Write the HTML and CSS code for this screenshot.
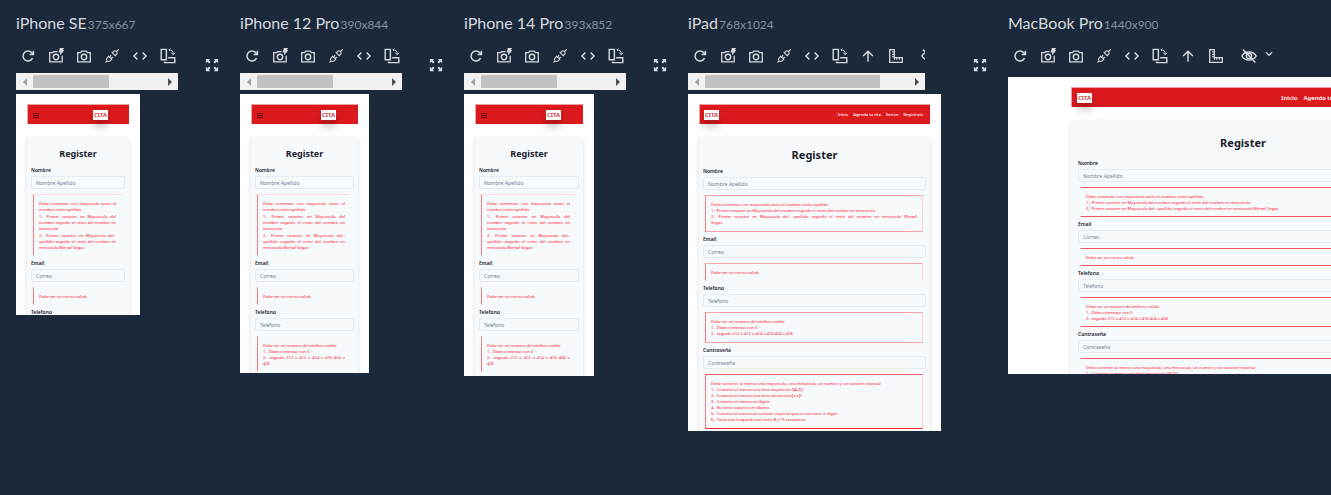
FILE: index.html
```html
<!DOCTYPE html>
<html lang="es">
<head>
<meta charset="utf-8">
<title>Device preview</title>
<link rel="stylesheet" href="styles.css">
</head>
<body>
<svg class="sprite" aria-hidden="true">
  <symbol id="i-refresh" viewBox="0 0 16 16"><path d="M12.5 10.2A5 5 0 1 1 11.8 4.7L13.2 6.2M13.4 2.8V6.4H9.6" fill="none" stroke="currentColor" stroke-width="1.5"/></symbol>
  <symbol id="i-flash" viewBox="0 0 16 16"><path d="M9.6 3.7H5.6L4.6 4.7H1.7V13.9H14.2V7.8" fill="none" stroke="currentColor" stroke-width="1.3"/><circle cx="8" cy="9" r="2.7" fill="none" stroke="currentColor" stroke-width="1.4"/><path d="M11.8 0H16L14.8 2.2H16.4L11.9 7.6 12.4 4.6H10.6Z" fill="currentColor"/></symbol>
  <symbol id="i-camera" viewBox="0 0 16 16"><path d="M1.7 4.6H4.6L5.7 3.2H10.3L11.4 4.6H14.3V13.9H1.7Z" fill="none" stroke="currentColor" stroke-width="1.3"/><circle cx="8" cy="9" r="2.7" fill="none" stroke="currentColor" stroke-width="1.4"/></symbol>
  <symbol id="i-plug" viewBox="0 0 16 16"><path d="M1.4 14.6 3.6 12.4M12.4 3.6 14.6 1.4M3.2 9.8 4.8 8.2 7.8 11.2 6.2 12.8A2.1 2.1 0 0 1 3.2 9.8ZM8.3 4.8 9.9 3.2A2.1 2.1 0 0 1 12.8 6.1L11.2 7.7ZM5.6 8.8 7.2 7.2M7.2 10.4 8.8 8.8M7.8 4.3 11.7 8.2M4.3 7.8 8.2 11.7" fill="none" stroke="currentColor" stroke-width="1.1"/></symbol>
  <symbol id="i-code" viewBox="0 0 16 16"><path d="M5.4 4.5 2 8 5.4 11.5M10.6 4.5 14 8 10.6 11.5" fill="none" stroke="currentColor" stroke-width="1.5"/></symbol>
  <symbol id="i-rotate" viewBox="0 0 16 16"><path d="M1.2 1.4H6.4V11.8H1.2ZM8.2 9.7H14.8V14.6H4.6V13.4" fill="none" stroke="currentColor" stroke-width="1.4"/><path d="M9 1.8C11.5 1.8 13.3 3.2 13.3 6.4M11.4 4.8 13.3 6.7 15.2 4.8M10.3.5 9 1.8 10.3 3.1" fill="none" stroke="currentColor" stroke-width="1"/></symbol>
  <symbol id="i-up" viewBox="0 0 16 16"><path d="M8 13.5V3.3M3.2 8 8 3.2 12.8 8" fill="none" stroke="currentColor" stroke-width="1.5"/></symbol>
  <symbol id="i-ruler" viewBox="0 0 16 16"><path d="M1.7 1.7H6.3V9.7H14.3V14.3H1.7Z" fill="none" stroke="currentColor" stroke-width="1.3"/><path d="M4 4H6M4 6.4H6M4 8.8H6M6.4 12V10M8.8 12V10M11.2 12V10" fill="none" stroke="currentColor" stroke-width="1"/></symbol>
  <symbol id="i-eye" viewBox="0 0 16 16"><path d="M.9 8C3.7 2.6 12.3 2.6 15.1 8 12.3 13.4 3.7 13.4.9 8ZM2 1.6 14.4 14.4" fill="none" stroke="currentColor" stroke-width="1.5"/><circle cx="8" cy="8" r="2.6" fill="none" stroke="currentColor" stroke-width="1.5"/></symbol>
  <symbol id="i-down" viewBox="0 0 16 16"><path d="M3 5 8 10 13 5" fill="none" stroke="currentColor" stroke-width="2"/></symbol>
  <symbol id="i-expand" viewBox="0 0 16 16"><path d="M1 6V1H6L4.4 2.6 6.4 4.6 4.6 6.4 2.6 4.4ZM10 1H15V6L13.4 4.4 11.4 6.4 9.6 4.6 11.6 2.6ZM1 10V15H6L4.4 13.4 6.4 11.4 4.6 9.6 2.6 11.6ZM15 10V15H10L11.6 13.4 9.6 11.4 11.4 9.6 13.4 11.6Z" fill="currentColor"/></symbol>
  <symbol id="i-menu" viewBox="0 0 6 6"><path d="M0 1.5H6M0 3.5H6M0 5.5H6" stroke="currentColor" stroke-width=".7"/></symbol>
</svg>

<main class="devices">
  <section class="device">
    <h2 class="device-title">iPhone SE <small>375x667</small></h2>
    <div class="controls">
      <div class="tool-area">
        <div class="toolbar">
          <button aria-label="Refresh"><svg><use href="#i-refresh"/></svg></button>
          <button aria-label="Quick screenshot"><svg><use href="#i-flash"/></svg></button>
          <button aria-label="Full screenshot"><svg><use href="#i-camera"/></svg></button>
          <button aria-label="Disable sync"><svg><use href="#i-plug"/></svg></button>
          <button aria-label="Devtools"><svg><use href="#i-code"/></svg></button>
          <button aria-label="Rotate"><svg><use href="#i-rotate"/></svg></button>
        </div>
        <div class="scroller"><i class="arrow arrow-left"></i><span class="track"><i class="thumb"></i></span><i class="arrow arrow-right"></i></div>
      </div>
      <button class="expand" aria-label="Expand"><svg><use href="#i-expand"/></svg></button>
    </div>
    <div class="screen screen-se">
      <header class="navbar"><button class="menu" aria-label="Menu"><svg><use href="#i-menu"/></svg></button><span class="logo">CITA</span></header>
      <form class="card">
        <h1>Register</h1>
        <label for="se-name">Nombre</label>
        <input id="se-name" placeholder="Nombre Apellido">
        <div class="rules spaced"><p>Debe comenzar con mayuscula tanto el nombre como apellido</p><p>1.- Primer caracter en Mayuscula del nombre seguido el resto del nombre en minuscula</p><p>2.- Primer caracter en Mayuscula del.. apellido seguido el resto del nombre en minuscula Merwil Vegas</p></div>
        <label for="se-mail">Email</label>
        <input id="se-mail" placeholder="Correo">
        <div class="rules open"><p>Debe ser un correo valido</p></div>
        <label for="se-tel">Telefono</label>
        <input id="se-tel" placeholder="Telefono">
      </form>
    </div>
  </section>

  <section class="device">
    <h2 class="device-title">iPhone 12 Pro <small>390x844</small></h2>
    <div class="controls">
      <div class="tool-area">
        <div class="toolbar">
          <button aria-label="Refresh"><svg><use href="#i-refresh"/></svg></button>
          <button aria-label="Quick screenshot"><svg><use href="#i-flash"/></svg></button>
          <button aria-label="Full screenshot"><svg><use href="#i-camera"/></svg></button>
          <button aria-label="Disable sync"><svg><use href="#i-plug"/></svg></button>
          <button aria-label="Devtools"><svg><use href="#i-code"/></svg></button>
          <button aria-label="Rotate"><svg><use href="#i-rotate"/></svg></button>
        </div>
        <div class="scroller"><i class="arrow arrow-left"></i><span class="track"><i class="thumb"></i></span><i class="arrow arrow-right"></i></div>
      </div>
      <button class="expand" aria-label="Expand"><svg><use href="#i-expand"/></svg></button>
    </div>
    <div class="screen screen-12">
      <header class="navbar"><button class="menu" aria-label="Menu"><svg><use href="#i-menu"/></svg></button><span class="logo">CITA</span></header>
      <form class="card">
        <h1>Register</h1>
        <label for="p12-name">Nombre</label>
        <input id="p12-name" placeholder="Nombre Apellido">
        <div class="rules spaced"><p><span class="full">Debe comenzar con mayuscula tanto el</span>nombre como apellido</p><p>1.- Primer caracter en Mayuscula del nombre seguido el resto del nombre en minuscula</p><p>2.- Primer caracter en Mayuscula del.. apellido seguido el resto del nombre en minuscula Merwil Vegas</p></div>
        <label for="p12-mail">Email</label>
        <input id="p12-mail" placeholder="Correo">
        <div class="rules open"><p>Debe ser un correo valido</p></div>
        <label for="p12-tel">Telefono</label>
        <input id="p12-tel" placeholder="Telefono">
        <div class="rules open"><p>Debe ser un numero de telefono valido</p><p>1.- Debe comenzar con 0</p><p><span class="full">2.- seguido 212 o 412 o 414 o 416 424 o</span>426</p></div>
      </form>
    </div>
  </section>

  <section class="device">
    <h2 class="device-title">iPhone 14 Pro <small>393x852</small></h2>
    <div class="controls">
      <div class="tool-area">
        <div class="toolbar">
          <button aria-label="Refresh"><svg><use href="#i-refresh"/></svg></button>
          <button aria-label="Quick screenshot"><svg><use href="#i-flash"/></svg></button>
          <button aria-label="Full screenshot"><svg><use href="#i-camera"/></svg></button>
          <button aria-label="Disable sync"><svg><use href="#i-plug"/></svg></button>
          <button aria-label="Devtools"><svg><use href="#i-code"/></svg></button>
          <button aria-label="Rotate"><svg><use href="#i-rotate"/></svg></button>
        </div>
        <div class="scroller"><i class="arrow arrow-left"></i><span class="track"><i class="thumb"></i></span><i class="arrow arrow-right"></i></div>
      </div>
      <button class="expand" aria-label="Expand"><svg><use href="#i-expand"/></svg></button>
    </div>
    <div class="screen screen-14">
      <header class="navbar"><button class="menu" aria-label="Menu"><svg><use href="#i-menu"/></svg></button><span class="logo">CITA</span></header>
      <form class="card">
        <h1>Register</h1>
        <label for="p14-name">Nombre</label>
        <input id="p14-name" placeholder="Nombre Apellido">
        <div class="rules spaced"><p><span class="full">Debe comenzar con mayuscula tanto el</span>nombre como apellido</p><p>1.- Primer caracter en Mayuscula del nombre seguido el resto del nombre en minuscula</p><p>2.- Primer caracter en Mayuscula del.. apellido seguido el resto del nombre en minuscula Merwil Vegas</p></div>
        <label for="p14-mail">Email</label>
        <input id="p14-mail" placeholder="Correo">
        <div class="rules open"><p>Debe ser un correo valido</p></div>
        <label for="p14-tel">Telefono</label>
        <input id="p14-tel" placeholder="Telefono">
        <div class="rules open"><p>Debe ser un numero de telefono valido</p><p>1.- Debe comenzar con 0</p><p><span class="full">2.- seguido 212 o 412 o 414 o 416 424 o</span>426</p></div>
      </form>
    </div>
  </section>

  <section class="device tablet">
    <h2 class="device-title">iPad <small>768x1024</small></h2>
    <div class="controls">
      <div class="tool-area">
        <div class="toolbar">
          <button aria-label="Refresh"><svg><use href="#i-refresh"/></svg></button>
          <button aria-label="Quick screenshot"><svg><use href="#i-flash"/></svg></button>
          <button aria-label="Full screenshot"><svg><use href="#i-camera"/></svg></button>
          <button aria-label="Disable sync"><svg><use href="#i-plug"/></svg></button>
          <button aria-label="Devtools"><svg><use href="#i-code"/></svg></button>
          <button aria-label="Rotate"><svg><use href="#i-rotate"/></svg></button>
          <button aria-label="Scroll to top"><svg><use href="#i-up"/></svg></button>
          <button aria-label="Rulers"><svg><use href="#i-ruler"/></svg></button>
          <button class="vision" aria-label="Vision simulation"><svg><use href="#i-eye"/></svg></button>
        </div>
        <div class="scroller"><i class="arrow arrow-left"></i><span class="track"><i class="thumb"></i></span><i class="arrow arrow-right"></i></div>
      </div>
      <button class="expand" aria-label="Expand"><svg><use href="#i-expand"/></svg></button>
    </div>
    <div class="screen screen-ipad">
      <header class="navbar"><span class="logo">CITA</span><nav><a href="#">Inicio</a><a href="#">Agenda tu cita</a><a href="#">Sesion</a><a href="#">Registrate</a></nav></header>
      <form class="card">
        <h1>Register</h1>
        <label for="pad-name">Nombre</label>
        <input id="pad-name" placeholder="Nombre Apellido">
        <div class="rules"><p>Debe comenzar con mayuscula tanto el nombre como apellido</p><p>1.- Primer caracter en Mayuscula del nombre seguido el resto del nombre en minuscula</p><p><span class="full">2.- Primer caracter en Mayuscula del.. apellido seguido el resto del nombre en minuscula Merwil</span>Vegas</p></div>
        <label for="pad-mail">Email</label>
        <input id="pad-mail" placeholder="Correo">
        <div class="rules open"><p>Debe ser un correo valido</p></div>
        <label for="pad-tel">Telefono</label>
        <input id="pad-tel" placeholder="Telefono">
        <div class="rules"><p>Debe ser un numero de telefono valido</p><p>1.- Debe comenzar con 0</p><p>2.- seguido 212 o 412 o 414 o 416 424 o 426</p></div>
        <label for="pad-pass">Contraseña</label>
        <input id="pad-pass" type="password" placeholder="Contraseña">
        <div class="rules strong"><p>Debe contener al menos una mayuscula, una minuscula, un numero y un caracter especial</p><p>1.- Contiene al menos una letra mayúscula ([A-Z]).</p><p>2.- Contiene al menos una letra minúscula ([a-z]).</p><p>3.- Contiene al menos un dígito .</p><p>4.- No tiene espacios en blanco.</p><p>5.- Contiene al menos un carácter especial que no sea letra ni dígito</p><p>6.- Tiene una longitud total entre 8 y 15 caracteres.</p></div>
      </form>
    </div>
  </section>

  <section class="device desktop">
    <h2 class="device-title">MacBook Pro <small>1440x900</small></h2>
    <div class="controls">
      <div class="tool-area">
        <div class="toolbar">
          <button aria-label="Refresh"><svg><use href="#i-refresh"/></svg></button>
          <button aria-label="Quick screenshot"><svg><use href="#i-flash"/></svg></button>
          <button aria-label="Full screenshot"><svg><use href="#i-camera"/></svg></button>
          <button aria-label="Disable sync"><svg><use href="#i-plug"/></svg></button>
          <button aria-label="Devtools"><svg><use href="#i-code"/></svg></button>
          <button aria-label="Rotate"><svg><use href="#i-rotate"/></svg></button>
          <button aria-label="Scroll to top"><svg><use href="#i-up"/></svg></button>
          <button aria-label="Rulers"><svg><use href="#i-ruler"/></svg></button>
          <button class="vision" aria-label="Vision simulation"><svg><use href="#i-eye"/></svg></button>
          <button class="chevron" aria-label="Vision options"><svg><use href="#i-down"/></svg></button>
        </div>
      </div>
    </div>
    <div class="screen screen-mac">
      <header class="navbar"><span class="logo">CITA</span><nav><a href="#">Inicio</a><a href="#">Agenda tu cita</a><a href="#">Sesion</a><a href="#">Registrate</a></nav></header>
      <form class="card">
        <h1>Register</h1>
        <label for="mac-name">Nombre</label>
        <input id="mac-name" placeholder="Nombre Apellido">
        <div class="rules"><p>Debe comenzar con mayuscula tanto el nombre como apellido</p><p>1.- Primer caracter en Mayuscula del nombre seguido el resto del nombre en minuscula</p><p>2.- Primer caracter en Mayuscula del.. apellido seguido el resto del nombre en minuscula Merwil Vegas</p></div>
        <label for="mac-mail">Email</label>
        <input id="mac-mail" placeholder="Correo">
        <div class="rules"><p>Debe ser un correo valido</p></div>
        <label for="mac-tel">Telefono</label>
        <input id="mac-tel" placeholder="Telefono">
        <div class="rules"><p>Debe ser un numero de telefono valido</p><p>1.- Debe comenzar con 0</p><p>2.- seguido 212 o 412 o 414 o 416 424 o 426</p></div>
        <label for="mac-pass">Contraseña</label>
        <input id="mac-pass" type="password" placeholder="Contraseña">
        <div class="rules"><p>Debe contener al menos una mayuscula, una minuscula, un numero y un caracter especial</p><p>1.- Contiene al menos una letra mayúscula ([A-Z]).</p></div>
      </form>
    </div>
  </section>
</main>
</body>
</html>
```
FILE: styles.css
```css
* { box-sizing: border-box; }
body { margin: 0; min-height: 100vh; overflow: hidden; background: #1b293b; color: #d5d9dd; font-family: Lato, sans-serif; }
button { margin: 0; padding: 0; border: 0; background: none; color: inherit; }
.sprite { display: none; }

/* Device strip */
.devices { display: flex; align-items: flex-start; gap: 16px; padding: 13px 16px; overflow: hidden; }
.device { flex: none; width: 208px; }
.tablet { width: 304px; }
.desktop { width: 560px; }
.device-title { margin: 0; font-size: 16px; line-height: 20px; font-weight: 400; white-space: nowrap; }
.device-title small { margin-left: -3px; font-size: 12px; color: #87909b; }

.controls { display: flex; align-items: center; justify-content: space-between; padding: 5px 6px 0 0; }
.tool-area { width: 162px; padding-top: 4px; overflow: hidden; }
.tablet .tool-area { width: 237px; }
.desktop .tool-area { width: auto; }
.toolbar { display: flex; gap: 4px; padding-bottom: 5px; }
.toolbar button { display: flex; flex: none; align-items: center; justify-content: center; width: 24px; height: 24px; }
.toolbar svg { width: 16px; height: 16px; overflow: visible; }
.toolbar .vision { margin-left: 5px; }
.toolbar .chevron { width: 16px; margin-left: -4px; }
.toolbar .chevron svg { width: 10px; height: 10px; margin-bottom: 4px; }
.expand svg { display: block; width: 14px; height: 14px; margin-right: -1px; }

.scroller { display: flex; align-items: center; height: 17px; background: #f1f1f1; }
.arrow { display: flex; flex: none; justify-content: center; width: 17px; }
.arrow::before { content: ""; border: 4px solid transparent; }
.arrow-left::before { border-left-width: 0; border-right-color: #a3a3a3; }
.arrow-right::before { border-right-width: 0; border-left-color: #505050; }
.track { flex: 1; }
.thumb { display: block; width: 59%; height: 13px; background: #c1c1c1; }
.tablet .thumb { width: 86%; }

/* Previewed page */
.screen { margin-top: 4px; padding: 10px 11px 0; overflow: hidden; background: #fff; color: #1a202c; font-family: "Noto Sans", "Open Sans", sans-serif; }
.screen-se { width: 124px; aspect-ratio: 375 / 667; }
.screen-12 { width: 129px; aspect-ratio: 390 / 844; }
.screen-14 { width: 130px; aspect-ratio: 393 / 852; }
.screen-ipad { width: 253px; aspect-ratio: 768 / 1024; }
.screen-mac { width: 475px; aspect-ratio: 1440 / 900; padding: 10px 68px 0 63px; }

.navbar { display: flex; align-items: center; justify-content: space-between; height: 20px; padding: 0 21px 0 5px; background: #dc1a1d; border-top: 1px solid #f0a0a2; border-left: 1px solid #f0a0a2; }
.screen-12 .navbar, .screen-14 .navbar { padding-right: 22px; }
.screen-ipad .navbar { padding: 0 7px 0 4px; }
.screen-mac .navbar { padding: 0 8px 0 5px; }
.menu svg { display: block; width: 6px; height: 6px; color: #30080c; }
.logo { width: 15px; height: 10px; background: #fff; color: #c81a1d; font-size: 6px; line-height: 10px; font-weight: 600; text-align: center; box-shadow: 0 6px 8px rgba(0, 0, 0, .25); }
.navbar nav { display: flex; gap: 5px; font-size: 4px; line-height: 6px; font-weight: 500; }
.screen-mac nav { gap: 6px; font-size: 6px; font-weight: 600; line-height: 8px; }
.navbar a { color: #fff; text-decoration: none; white-space: nowrap; }

.card { display: flex; flex-direction: column; height: 600px; margin-top: 14px; padding: 8px 4px; background: #f7fafc; border-radius: 3px; box-shadow: 0 1px 5px rgba(0, 0, 0, .13); }
.card h1 { margin: 0; font-size: 9px; line-height: 15px; font-weight: 700; text-align: center; }
.screen-ipad h1, .screen-mac h1 { font-size: 11px; }
.screen-ipad .card { padding-top: 9px; }
.screen-mac .card { padding: 14px 7px; }
.screen-mac h1 { margin-bottom: 3px; line-height: 16px; }
.card label { margin-top: 5px; font-size: 5px; line-height: 8px; font-weight: 600; }
.rules + label { margin-top: 3px; }
.card input { width: 100%; height: 13px; margin: 2px 0 0; padding: 0 4px; border: 1px solid #e5ebf2; border-radius: 2px; background: #f7fafc; font-family: inherit; font-size: 5px; line-height: 8px; }
.card input::placeholder { color: #718096; opacity: 1; }
.rules { display: flex; flex-direction: column; margin: 5px 3px 0 2px; padding: 6px 5px 4px; border: 1px solid #fbe0e3; border-left-color: #f77a7e; border-right-color: transparent; border-bottom-color: transparent; color: #ff0a1a; font-size: 4px; line-height: 6px; text-align: justify; }
.spaced { gap: 1px; }
.open { border-top-color: transparent; }
.rules p { margin: 0; }
.full { display: block; text-align-last: justify; white-space: nowrap; }
.screen-ipad .rules { padding-bottom: 5px; border-color: #f9a3a7 #fbcdd1 #f9a3a7 #f77a7e; }
.screen-ipad .open { padding-bottom: 4px; border-bottom-color: transparent; }
.screen-ipad .strong { border-color: #f9595c #fbcdd1 #f02a2e #f77a7e; }
.screen-mac .rules { border-color: #f4585a transparent; }
```
